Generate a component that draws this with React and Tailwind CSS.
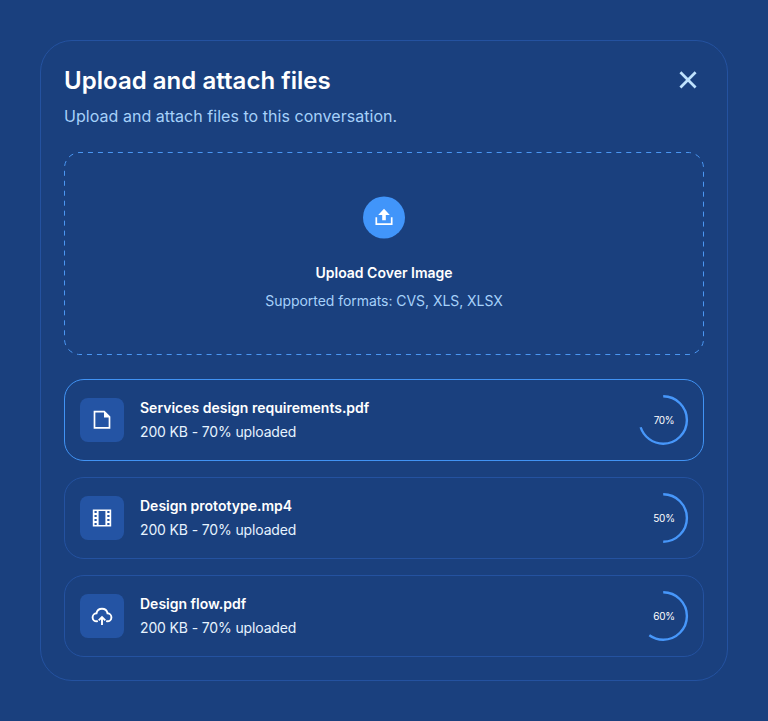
const FILES = [
  { name: 'Services design requirements.pdf', percent: 70, icon: FileIcon, active: true },
  { name: 'Design prototype.mp4', percent: 50, icon: FilmIcon },
  { name: 'Design flow.pdf', percent: 60, icon: CloudIcon },
];

function FileIcon() {
  return (
    <svg width="24" height="24" viewBox="0 0 24 24" fill="none">
      <path d="M4.5 3.6H14.2L19.5 8.9V19.8H4.5Z" stroke="#fff" strokeWidth="1.7" />
      <path d="M14 3.2V9.4H20.1Z" fill="#fff" />
    </svg>
  );
}

function FilmIcon() {
  return (
    <svg width="24" height="24" viewBox="0 0 24 24">
      <path
        fill="#fff"
        fillRule="evenodd"
        d="M2.8 3.4H21.2V20.6H2.8ZM8.6 5H15.4V19H8.6ZM4.5 5.1H6.7V7.1H4.5ZM4.5 9.1H6.7V11.1H4.5ZM4.5 13.1H6.7V15.1H4.5ZM4.5 17.1H6.7V19H4.5ZM17.3 5.1H19.5V7.1H17.3ZM17.3 9.1H19.5V11.1H17.3ZM17.3 13.1H19.5V15.1H17.3ZM17.3 17.1H19.5V19H17.3Z"
      />
    </svg>
  );
}

function CloudIcon() {
  return (
    <svg width="24" height="24" viewBox="0 0 24 24" fill="none" stroke="#fff" strokeWidth="1.9">
      <path d="M7.1 17.3H6.7A4 4 0 0 1 6.5 9.3A5.6 5.6 0 0 1 17.5 9.3A4 4 0 0 1 17.3 17.3H16.9" strokeLinecap="round" />
      <path d="M12 21V13.4M8.7 16.3L12 13L15.3 16.3" />
    </svg>
  );
}

function Ring({ percent }) {
  return (
    <svg width="48" height="50" viewBox="0 0 48 50" className="overflow-visible">
      <circle
        cx="23.2"
        cy="25"
        r="23.7"
        fill="none"
        stroke="#4797fa"
        strokeWidth="2.4"
        pathLength="100"
        strokeDasharray={`${percent} 100`}
        transform="rotate(-90 23.2 25)"
      />
      <text x="24" y="28.5" textAnchor="middle" fill="#fff" className="text-[10px] tracking-[-0.03em]">
        {percent}%
      </text>
    </svg>
  );
}

function FileRow({ file }) {
  const Icon = file.icon;
  return (
    <li
      className={`flex h-[82px] items-center rounded-[20px] border px-[15px] ${
        file.active ? 'border-[#4193f4]' : 'border-[#2452a0]'
      }`}
    >
      <div className="flex size-11 items-center justify-center rounded-lg bg-[#2454a4]">
        <Icon />
      </div>
      <div className="ml-4 flex-1 text-sm leading-6 text-[#e6f3ff]">
        <p className="font-semibold text-white">{file.name}</p>
        <p className="tracking-[-0.01em]">200 KB - 70% uploaded</p>
      </div>
      <Ring percent={file.percent} />
    </li>
  );
}

export default function App() {
  return (
    <main className="h-[721px] w-[768px] bg-[#1a407e] p-10 font-['Inter',sans-serif] text-white">
      <section className="h-[641px] rounded-[32px] border border-[#2452a0] px-[23px] pt-[23px]">
        <header className="flex items-start justify-between">
          <div>
            <h1 className="pt-px text-2xl leading-8 font-semibold tracking-[0.03px]">Upload and attach files</h1>
            <p className="mt-[7px] text-base leading-6 tracking-[0.04px] text-[#a6d1fa]">
              Upload and attach files to this conversation.
            </p>
          </div>
          <button aria-label="Close" className="size-8">
            <svg width="32" height="32" viewBox="0 0 32 32">
              <path d="M8.4 8.3L23.6 23.5M23.6 8.3L8.4 23.5" stroke="#bfe2fd" strokeWidth="2.7" />
            </svg>
          </button>
        </header>

        <div className="relative mt-6 flex h-[203px] flex-col items-center pt-11">
          <svg className="absolute inset-0" width="640" height="203">
            <rect
              x="0.5"
              y="0.5"
              width="639"
              height="202"
              rx="15.5"
              fill="none"
              stroke="#4b97f2"
              strokeDasharray="5 4.968"
              strokeDashoffset="2"
            />
          </svg>
          <svg width="42" height="43" viewBox="0 0 42 43">
            <circle cx="21" cy="21.5" r="21" fill="#4195fa" />
            <path d="M21 12.8L26.8 18.9H22.8V24.2H19.2V18.9H15.2Z" fill="#fff" />
            <path d="M13.3 21.3V28.2H28.7V21.3" fill="none" stroke="#fff" strokeWidth="1.7" />
          </svg>
          <p className="mt-[22px] text-sm leading-6 font-semibold">Upload Cover Image</p>
          <p className="mt-1 text-sm leading-6 tracking-[-0.05px] text-[#a6d1fa]">Supported formats: CVS, XLS, XLSX</p>
        </div>

        <ul className="mt-6 flex flex-col gap-4">
          {FILES.map((file) => (
            <FileRow key={file.name} file={file} />
          ))}
        </ul>
      </section>
    </main>
  );
}
